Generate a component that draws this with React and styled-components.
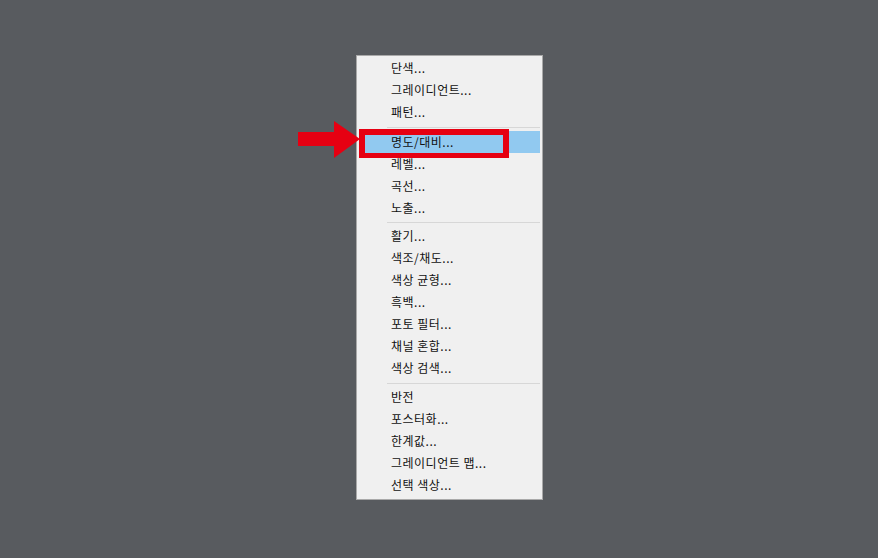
import React from "react";
import styled, { createGlobalStyle } from "styled-components";

const Global = createGlobalStyle`
  html, body { margin: 0; padding: 0; background: #585b5f; }
`;

const Page = styled.div`
  width: 878px;
  height: 558px;
  display: flex;
  justify-content: center;
  align-items: flex-start;
  padding: 55px 0 0 21px;
  box-sizing: border-box;
  background: #585b5f;
  overflow: hidden;
`;

const Menu = styled.div`
  position: relative;
  width: 187px;
  height: 445px;
  box-sizing: border-box;
  background: #f0f0f0;
  border: 1px solid #a9a9a9;
  padding: 1px 2px 0 1px;
  font-family: "Noto Sans CJK KR", "Liberation Sans", sans-serif;
  font-size: 12px;
  letter-spacing: 0.5px;
  color: #111;
`;

const Item = styled.div`
  height: 22px;
  line-height: 21px;
  margin-left: ${p => (p.$active ? "7px" : "0")};
  padding-left: ${p => (p.$active ? "26px" : "33px")};
  background: ${p => (p.$active ? "#91c9f0" : "transparent")};
  white-space: nowrap;
`;

const Separator = styled.div`
  height: ${p => p.$h}px;
  box-sizing: border-box;
  padding-top: ${p => p.$shift}px;
  padding-left: 29px;
  display: flex;
  align-items: center;
  &::after {
    content: "";
    flex: 1;
    height: 1px;
    background: #d7d7d7;
  }
`;

const Callout = styled.div`
  position: absolute;
  left: 2px;
  top: 73px;
  width: 150px;
  height: 29px;
  box-sizing: border-box;
  border: 6px solid #e60012;
  border-bottom-width: 5px;
`;

const Arrow = styled.svg`
  position: absolute;
  left: -59px;
  top: 65px;
`;

const groups = [
  { items: ["단색...", "그레이디언트...", "패턴..."], gap: 8, shift: 0 },
  { items: ["명도/대비...", "레벨...", "곡선...", "노출..."], gap: 6, shift: 0 },
  { items: ["활기...", "색조/채도...", "색상 균형...", "흑백...", "포토 필터...", "채널 혼합...", "색상 검색..."], gap: 7, shift: 2 },
  { items: ["반전", "포스터화...", "한계값...", "그레이디언트 맵...", "선택 색상..."] },
];

export default function App() {
  return (
    <Page>
      <Global />
      <Menu>
        {groups.map(g => (
          <React.Fragment key={g.items[0]}>
            {g.items.map(t => (
              <Item key={t} $active={t === "명도/대비..."}>{t}</Item>
            ))}
            {g.gap && <Separator $h={g.gap} $shift={g.shift} />}
          </React.Fragment>
        ))}
        <Callout />
        <Arrow width="62" height="37" viewBox="0 0 62 37">
          <path d="M0 11H36V0L62 18L36 37V25H0Z" fill="#e60012" />
        </Arrow>
      </Menu>
    </Page>
  );
}
